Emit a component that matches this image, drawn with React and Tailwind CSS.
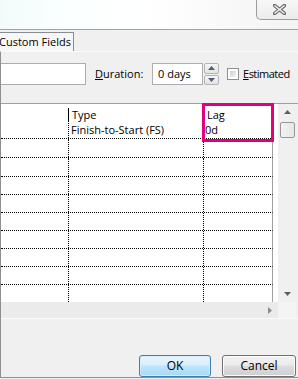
import React from 'react';

const rowHeights = [18, 19, 19, 18, 18, 18, 18, 18, 18];

function Spinner() {
  return (
    <div className="ml-px flex h-[22px] w-[15px] flex-col gap-px">
      {['up', 'down'].map(dir => (
        <div key={dir} className="flex flex-1 items-center justify-center rounded-[2px] border border-[#b5b5b5] bg-[linear-gradient(#f7f7f7,#e3e3e3)]">
          <svg width="7" height="4" viewBox="0 0 7 4">
            {dir === 'up'
              ? <path d="M0 4 L3.5 0 L7 4 Z" fill="#4e5d7a" />
              : <path d="M0 0 L3.5 4 L7 0 Z" fill="#4e5d7a" />}
          </svg>
        </div>
      ))}
    </div>
  );
}

export default function App() {
  return (
    <div className="relative h-[379px] w-[298px] overflow-hidden bg-[#f0f0f0] font-['Open_Sans',sans-serif] text-[11px] text-black">
      {/* Title bar */}
      <div className="flex h-[30px] justify-end border-b border-[#a3a3a3] bg-[linear-gradient(to_right,#f2fbfb,#fcffff_25%,#ffffff_50%,#f3f3f3)]">
        <div className="flex h-[20px] w-[42px] items-center justify-center rounded-bl-[5px] border-b border-l border-[#9c9c9c] bg-[linear-gradient(#f8f8f8,#ececec)] pl-[4px]">
          <svg width="13" height="11" viewBox="0 0 13 11">
            <path d="M1.5 1.5 L11.5 9.5 M11.5 1.5 L1.5 9.5" stroke="#6f6f6f" strokeWidth="3.6" strokeLinecap="square" />
            <path d="M1.5 1.5 L11.5 9.5 M11.5 1.5 L1.5 9.5" stroke="#f4f4f4" strokeWidth="1.4" />
          </svg>
        </div>
      </div>

      {/* Tab strip */}
      <div className="flex h-[21px] items-end">
        <div className="ml-[-2px] flex h-[19px] w-[76px] items-center whitespace-nowrap border-r border-t border-[#898c95] bg-[#f7f7f7] pl-[1px]">
          Custom Fields
        </div>
      </div>

      {/* Panel */}
      <div className="flex h-[327px] flex-col border-l border-t border-[#8f8f8f] border-t-[#fbfbfb]">
        {/* Inputs row */}
        <div className="mt-[11px] flex items-center whitespace-nowrap">
          <div className="h-[22px] w-[85px] border border-l-0 border-[#abadb3] bg-white" />
          <span className="ml-[9px] w-[57px]"><span className="underline">D</span>uration:</span>
          <div className="flex h-[22px] w-[51px] items-center border border-[#abadb3] bg-white pl-[5px]">0 days</div>
          <Spinner />
          <div className="ml-[8px] h-[12px] w-[12px] border border-[#8e8f8f] bg-white p-[2px]">
            <div className="h-full w-full bg-[linear-gradient(135deg,#cfcfcf,#f4f4f4)]" />
          </div>
          <span className="ml-[4px] tracking-[-0.5px]"><span className="underline">E</span>stimated</span>
        </div>

        {/* Table */}
        <div className="mt-[18px] flex h-[216px] flex-col border-t border-[#a0a0a0]">
          <div className="flex h-[198px]">
            {/* Cells */}
            <div className="relative flex w-[277px] flex-col bg-white">
              <div className="flex h-[17px] w-[272px] items-start border-r border-[#a0a0a0] pt-[4px] leading-[13px]">
                <div className="h-full w-[68px] border-r border-black" />
                <div className="w-[135px] pl-[3px]">Type</div>
                <div className="pl-[3px]">Lag</div>
              </div>
              {rowHeights.map((h, i) => (
                <div
                  key={i}
                  style={{ height: h }}
                  className="flex w-[272px] items-center border-b border-r border-b-black border-r-[#a0a0a0] border-dotted [border-right-style:solid]"
                >
                  <div className="h-full w-[68px] border-r border-dotted border-black" />
                  <div className="h-full w-[135px] border-r border-dotted border-black pl-[2px] leading-[17px]">
                    {i === 0 ? 'Finish-to-Start (FS)' : ''}
                  </div>
                  <div className="h-full pl-[1px] leading-[17px]">{i === 0 ? '0d' : ''}</div>
                </div>
              ))}
              <div className="flex w-[272px] flex-1 border-r border-[#a0a0a0]">
                <div className="h-full w-[68px] border-r border-dotted border-black" />
                <div className="h-full w-[135px] border-r border-dotted border-black" />
              </div>

              {/* Highlight */}
              <div className="absolute left-[201px] top-[-1px] h-[39px] w-[72px] border-[3px] border-[#e4007c]" />
            </div>

            {/* Vertical scrollbar */}
            <div className="flex w-[18px] flex-col items-center bg-[#f0f0f0] pt-[6px]">
              <svg width="7" height="4" viewBox="0 0 7 4">
                <path d="M0 4 L3.5 0 L7 4 Z" fill="#606060" />
              </svg>
              <div className="mt-[8px] h-[16px] w-[15px] rounded-[2px] border border-[#979797] bg-[linear-gradient(to_right,#f3f3f3,#e6e6e6)]" />
              <div className="flex-1" />
              <svg className="mb-[6px]" width="7" height="4" viewBox="0 0 7 4">
                <path d="M0 0 L3.5 4 L7 0 Z" fill="#606060" />
              </svg>
            </div>
          </div>

          {/* Horizontal scrollbar */}
          <div className="flex h-[17px] border-b border-[#fafafa]">
            <div className="flex w-[277px] items-center justify-end bg-[#ebebeb] pr-[6px]">
              <svg width="4" height="7" viewBox="0 0 4 7">
                <path d="M0 0 L4 3.5 L0 7 Z" fill="#8a8a8a" />
              </svg>
            </div>
            <div className="w-[18px] bg-[#f4f4f4]" />
          </div>
        </div>

        {/* Buttons */}
        <div className="mt-[36px] flex gap-[11px] pl-[138px]">
          <button className="h-[22px] w-[72px] rounded-[3px] border border-[#3c7fb1] bg-[linear-gradient(#e8f5fc,#d9effa_45%,#bee6fd_50%,#a7d9f5)] shadow-[inset_0_0_0_1px_#d6eefb] text-[12px]">
            OK
          </button>
          <button className="h-[22px] w-[74px] rounded-[3px] border border-[#707070] bg-[linear-gradient(#f2f2f2,#ebebeb_45%,#dddddd_50%,#cfcfcf)] shadow-[inset_0_0_0_1px_#fcfcfc] text-[12px]">
            Cancel
          </button>
        </div>
      </div>
      <div className="absolute bottom-[1px] left-0 h-px w-full bg-[#8f8f8f]" />
    </div>
  );
}
